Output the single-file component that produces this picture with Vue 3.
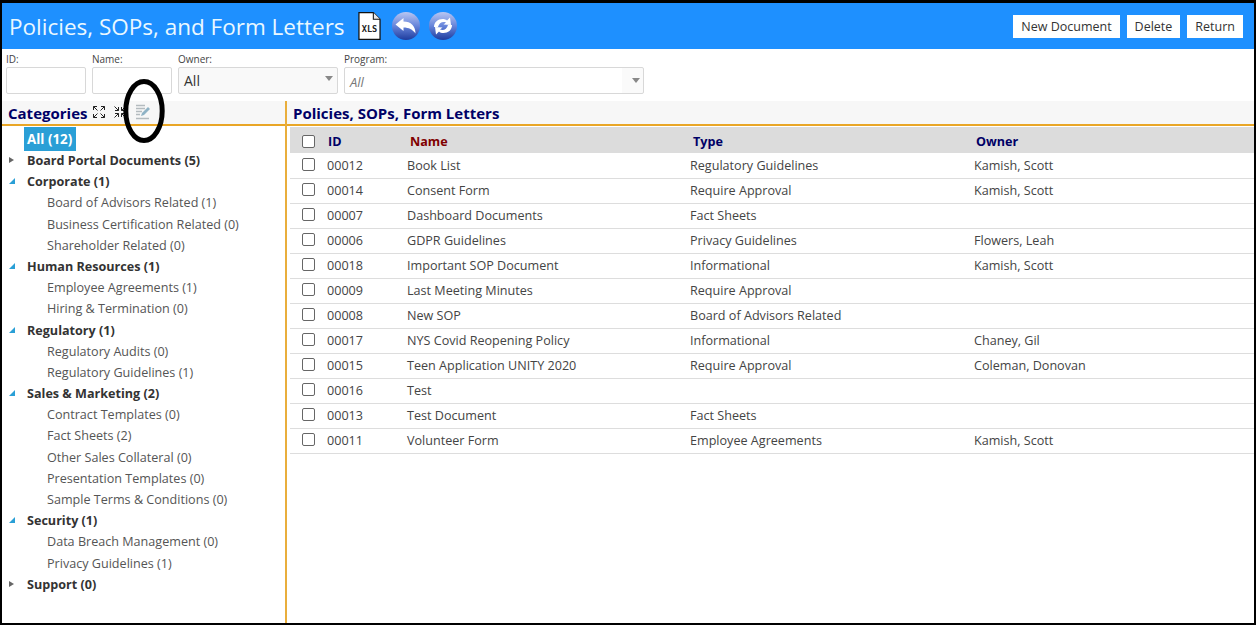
<template>
  <div class="page">
    <!-- Title bar -->
    <header class="topbar">
      <h1>Policies, SOPs, and Form Letters</h1>
      <svg class="xls" width="23" height="30" viewBox="0 0 24 30">
        <path d="M1 1H16L23 8V29H1Z" fill="#fff" stroke="#111" stroke-width="1.3" />
        <path d="M16 1V8H23" fill="#e8e8e8" stroke="#111" stroke-width="1.1" />
        <text x="12" y="21" text-anchor="middle" class="xls-text">XLS</text>
      </svg>
      <svg class="round back" width="28" height="28" viewBox="1 1 28 28">
        <defs>
          <linearGradient id="ball" x1="0" y1="0" x2="0" y2="1">
            <stop offset="0" stop-color="#b9c6f2" />
            <stop offset="0.5" stop-color="#6684da" />
            <stop offset="1" stop-color="#1e3c9e" />
          </linearGradient>
        </defs>
        <circle cx="15" cy="15" r="14" fill="url(#ball)" />
        <path d="M4.500 13.500L12.500 7V10.500C20 10.500 24.500 15 24.500 22.500C21.500 18.500 18 16.500 12.500 16.500V20Z" fill="#fff" />
      </svg>
      <svg class="round" width="28" height="28" viewBox="1 1 28 28">
        <circle cx="15" cy="15" r="14" fill="url(#ball)" />
        <path d="M6 16C6 11 10 8 14.500 8C16.500 8 18 8.500 19 9.500L22 6.500L23 14L15.500 13.500L18 11.500C14.500 10 11 12 10 16Z" fill="#fff" />
        <path d="M24 14C24 19 20 22 15.500 22C13.500 22 12 21.500 11 20.500L8 23.500L7 16L14.500 16.500L12 18.500C15.500 20 19 18 20 14Z" fill="#fff" />
      </svg>
      <div class="actions">
        <button>New Document</button>
        <button>Delete</button>
        <button>Return</button>
      </div>
    </header>

    <!-- Filters -->
    <div class="filters">
      <label class="field w-id"><span>ID:</span><div class="box"></div></label>
      <label class="field w-name"><span>Name:</span><div class="box"></div></label>
      <label class="field w-owner">
        <span>Owner:</span>
        <div class="box select">All<i class="caret"></i></div>
      </label>
      <label class="field w-program">
        <span>Program:</span>
        <div class="box select program">All<i class="caret"></i></div>
      </label>
    </div>

    <div class="main">
      <!-- Category tree -->
      <aside class="side">
        <div class="panel-head">
          <span class="panel-title">Categories</span>
          <svg class="tool expand" width="12" height="12" viewBox="0 0 12 12">
            <path d="M.5 4V.5H4M.5.500L4.500 4.500M8 .5H11.500V4M11.500 .5L7.500 4.500M.5 8V11.500H4M.5 11.500L4.500 7.500M11.500 8V11.500H8M11.500 11.500L7.500 7.500" fill="none" stroke="#222" />
          </svg>
          <svg class="tool collapse" width="12" height="12" viewBox="0 0 12 12">
            <path d="M.5.500L4.500 4.500M4.500 1V4.500H1M11.500 .5L7.500 4.500M7.500 1V4.500H11M.5 11.500L4.500 7.500M1 7.500H4.500V11M11.500 11.500L7.500 7.500M11 7.500H7.500V11" fill="none" stroke="#222" />
          </svg>
          <svg class="tool edit" width="16" height="16" viewBox="0 0 16 16">
            <path d="M1 1.500H10M1 4.500H10M1 7.500H7M1 10.500H5M1 14.500H14" fill="none" stroke="#b4bbbf" stroke-width="1.300" />
            <path d="M6 12L7 9L13 3L15 5L9 11Z" fill="#8fb3c6" />
          </svg>
        </div>
        <ul class="tree">
          <li class="tree-row all"><span class="selected">All (12)</span></li>
          <li
            v-for="item in categories"
            :key="item.label"
            :class="['tree-row', item.kids === undefined ? 'child' : 'parent']"
          >
            <i v-if="item.kids === false" class="arrow closed"></i>
            <i v-if="item.kids === true" class="arrow open"></i>
            {{ item.label }}
          </li>
        </ul>
      </aside>

      <!-- Documents -->
      <section class="content">
        <div class="panel-head">
          <span class="panel-title">Policies, SOPs, Form Letters</span>
        </div>
        <div class="table">
          <div class="row head">
            <div class="c-check"><span class="check"></span></div>
            <div class="c-id">ID</div>
            <div class="c-name">Name</div>
            <div class="c-type">Type</div>
            <div class="c-owner">Owner</div>
          </div>
          <div v-for="doc in documents" :key="doc.id" class="row">
            <div class="c-check"><span class="check"></span></div>
            <div class="c-id">{{ doc.id }}</div>
            <div class="c-name">{{ doc.name }}</div>
            <div class="c-type">{{ doc.type }}</div>
            <div class="c-owner">{{ doc.owner }}</div>
          </div>
        </div>
      </section>
    </div>

    <!-- Hand-drawn annotation over the screenshot -->
    <svg class="ring" width="44" height="68" viewBox="0 0 44 68">
      <ellipse cx="22" cy="34" rx="18.200" ry="29.500" fill="none" stroke="#000" stroke-width="5" />
    </svg>
  </div>
</template>

<script setup>
const categories = [
  { label: 'Board Portal Documents (5)', kids: false },
  { label: 'Corporate (1)', kids: true },
  { label: 'Board of Advisors Related (1)' },
  { label: 'Business Certification Related (0)' },
  { label: 'Shareholder Related (0)' },
  { label: 'Human Resources (1)', kids: true },
  { label: 'Employee Agreements (1)' },
  { label: 'Hiring & Termination (0)' },
  { label: 'Regulatory (1)', kids: true },
  { label: 'Regulatory Audits (0)' },
  { label: 'Regulatory Guidelines (1)' },
  { label: 'Sales & Marketing (2)', kids: true },
  { label: 'Contract Templates (0)' },
  { label: 'Fact Sheets (2)' },
  { label: 'Other Sales Collateral (0)' },
  { label: 'Presentation Templates (0)' },
  { label: 'Sample Terms & Conditions (0)' },
  { label: 'Security (1)', kids: true },
  { label: 'Data Breach Management (0)' },
  { label: 'Privacy Guidelines (1)' },
  { label: 'Support (0)', kids: false },
]

const documents = [
  { id: '00012', name: 'Book List', type: 'Regulatory Guidelines', owner: 'Kamish, Scott' },
  { id: '00014', name: 'Consent Form', type: 'Require Approval', owner: 'Kamish, Scott' },
  { id: '00007', name: 'Dashboard Documents', type: 'Fact Sheets', owner: '' },
  { id: '00006', name: 'GDPR Guidelines', type: 'Privacy Guidelines', owner: 'Flowers, Leah' },
  { id: '00018', name: 'Important SOP Document', type: 'Informational', owner: 'Kamish, Scott' },
  { id: '00009', name: 'Last Meeting Minutes', type: 'Require Approval', owner: '' },
  { id: '00008', name: 'New SOP', type: 'Board of Advisors Related', owner: '' },
  { id: '00017', name: 'NYS Covid Reopening Policy', type: 'Informational', owner: 'Chaney, Gil' },
  { id: '00015', name: 'Teen Application UNITY 2020', type: 'Require Approval', owner: 'Coleman, Donovan' },
  { id: '00016', name: 'Test', type: '', owner: '' },
  { id: '00013', name: 'Test Document', type: 'Fact Sheets', owner: '' },
  { id: '00011', name: 'Volunteer Form', type: 'Employee Agreements', owner: 'Kamish, Scott' },
]
</script>

<style>
html, body { margin: 0; background: #fff; overflow: hidden; }
</style>

<style scoped>
.page {
  position: relative;
  box-sizing: border-box;
  width: 1256px; height: 625px;
  border: 2px solid #000; border-top-width: 3px;
  display: flex; flex-direction: column;
  background: #fff; color: #333;
  font-family: "Open Sans", "Noto Sans", sans-serif;
  font-size: 12.600px;
}

/* TITLE BAR */
.topbar {
  height: 46px; flex: none;
  background: #1e90ff;
  display: flex; align-items: center;
  padding: 0 11px 0 7px;
}
.topbar h1 {
  margin: 0; color: #eaf8ff;
  font-size: 22.500px; font-weight: 400;
  white-space: nowrap;
}
.xls { margin-left: 13px; }
.xls-text { font: 700 9px "DejaVu Sans Mono", monospace; fill: #222; }
.round { margin-left: 9px; }
.round.back { margin-left: 11px; }
.actions { margin-left: auto; display: flex; gap: 7px; }
.actions button {
  height: 23px; padding: 0 8px;
  background: #fff; border: none;
  color: #333;
  font: inherit; font-size: 12.500px;
}

/* FILTERS */
.filters {
  height: 52px; flex: none;
  display: flex; gap: 6px;
  padding-left: 4px;
  box-sizing: border-box;
}
.field { display: block; padding-top: 4px; }
.field span { display: block; font-size: 10px; line-height: 13px; height: 14px; color: #444; }
.w-id, .w-name { width: 80px; }
.w-owner { width: 160px; }
.w-program { width: 300px; }
.box {
  box-sizing: border-box; height: 27px;
  border: 1px solid #d8d8d8; border-radius: 2px;
  position: relative;
}
.select { padding-left: 5px; line-height: 26px; font-size: 14px; background: #f9f9f9; }
.program {
  font-style: italic; font-size: 13px; line-height: 28px; color: #777;
  background: linear-gradient(to left, #fafafa 21px, #fff 21px);
}
.caret {
  position: absolute; right: 4px; top: 8px;
  border: 4px solid transparent; border-top: 5px solid #888; border-bottom: 0;
}
.program .caret { right: 3px; top: 10px; }

/* PANELS */
.main { flex: 1; display: flex; min-height: 0; }
.side { width: 283px; flex: none; border-right: 2px solid #e9ae3c; }
.content { flex: 1; min-width: 0; }
.panel-head {
  height: 23px; background: #f7f7f7;
  border-bottom: 2px solid #e9a626;
  display: flex; align-items: center;
  padding-left: 6px;
}
.panel-title { color: #000066; font-size: 15px; font-weight: 700; white-space: nowrap; padding-top: 1px; }
.tool { flex: none; margin-bottom: 2px; }
.expand { margin-left: 6px; }
.collapse { margin-left: 9px; }
.edit { margin-left: 9px; }

/* TREE */
.tree { list-style: none; margin: 0; padding: 3px 0 0; }
.tree-row {
  position: relative;
  height: 21.200px; line-height: 22px;
  white-space: nowrap;
}
.parent { padding-left: 25px; font-weight: 700; color: #333; }
.child { padding-left: 45px; color: #555; }
.all { height: 21px; padding-left: 22px; }
.selected {
  display: inline-block; vertical-align: top;
  height: 24px; line-height: 24px; margin-top: -2px; padding: 0 4px 0 3px;
  background: #2a9fd6; color: #fff; font-weight: 700; font-size: 13.400px;
}
.arrow { position: absolute; left: 7px; top: 7px; }
.arrow.closed { border: 3.500px solid transparent; border-left: 5px solid #666; border-right: 0; }
.arrow.open {
  left: 7px; width: 0; height: 0;
  border-bottom: 6px solid #2a9fd6; border-left: 6px solid transparent;
}

/* TABLE */
.table { padding: 1px 0 0 3px; }
.row {
  height: 25px; box-sizing: border-box; padding-bottom: 1px;
  display: grid; grid-template-columns: 37px 80px 283px 284px 1fr;
  align-items: center;
  border-bottom: 1px solid #ddd;
  color: #444;
}
.row > div { white-space: nowrap; }
.head {
  height: 26px; margin-bottom: 1px; padding: 2px 0 0;
  background: #dcdcdc; border: none;
  font-weight: 700; color: #000066;
}
.head .c-id { padding-left: 1px; }
.head .c-name { color: #800000; padding-left: 3px; }
.head .c-type { padding-left: 3px; }
.head .c-owner { padding-left: 2px; }
.c-check { padding-left: 12px; display: flex; margin-top: -2px; }
.head .c-check { margin-top: 0; }
.check {
  width: 13px; height: 13px; box-sizing: border-box;
  background: #fff; border: 1px solid #666; border-radius: 2px;
}

/* ANNOTATION */
.ring { position: absolute; left: 120px; top: 74px; }
</style>
